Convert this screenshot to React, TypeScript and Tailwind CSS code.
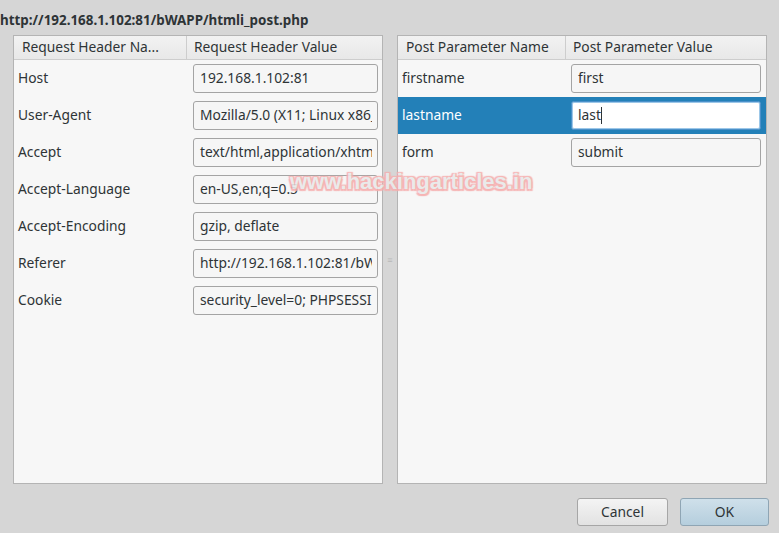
import type { ReactNode } from 'react';

const HEADERS: [string, string][] = [
  ['Host', '192.168.1.102:81'],
  ['User-Agent', 'Mozilla/5.0 (X11; Linux x86_64; rv:52.0) Gecko/20100101 Firefox/52.0'],
  ['Accept', 'text/html,application/xhtml+xml,application/xml;q=0.9,*/*;q=0.8'],
  ['Accept-Language', 'en-US,en;q=0.5'],
  ['Accept-Encoding', 'gzip, deflate'],
  ['Referer', 'http://192.168.1.102:81/bWAPP/htmli_post.php'],
  ['Cookie', 'security_level=0; PHPSESSID=2765ed8d6063b6d8d8768471c2e8f1ed'],
];

const PARAMS: [string, string][] = [
  ['firstname', 'first'],
  ['lastname', 'last'],
  ['form', 'submit'],
];

function Field({ value, active }: { value: string; active?: boolean }) {
  return (
    <div
      className={
        'h-[29px] flex items-center px-[5px] rounded-[3px] border ' +
        (active
          ? 'bg-white border-[#4a90c9] shadow-[inset_0_0_0_1px_#9cc7e8]'
          : 'bg-[#f6f6f6] border-[#a4a4a4]')
      }
    >
      <div className="flex-1 flex items-center overflow-hidden whitespace-nowrap pl-px">
        <span className="text-[#2e3436]">{value}</span>
        {active && <span className="w-px h-[17px] bg-[#2e3436] shrink-0" />}
      </div>
    </div>
  );
}

function Panel({
  cols,
  firstWidth,
  children,
}: {
  cols: [string, string];
  firstWidth: string;
  children: ReactNode;
}) {
  return (
    <div className="w-[370px] h-full bg-[#f7f7f7] border border-[#b4b4b4] flex flex-col">
      {/* Column headers */}
      <div className="h-[24px] flex bg-gradient-to-b from-[#f2f2f2] to-[#e8e8e8] border-b border-[#cdcdcd]">
        <div className={firstWidth + ' flex items-center pl-[8px] border-r border-[#cdcdcd] text-[#2e3436] whitespace-nowrap'}>
          {cols[0]}
        </div>
        <div className="flex-1 flex items-center pl-[7px] text-[#2e3436] whitespace-nowrap">{cols[1]}</div>
      </div>
      {children}
    </div>
  );
}

export default function App() {
  return (
    <div
      className="w-[779px] h-[533px] bg-[#d6d6d6] flex flex-col text-[13.8px] relative overflow-hidden"
      style={{ fontFamily: '"Noto Sans", "Open Sans", sans-serif' }}
    >
      {/* Title */}
      <div className="h-[35px] pt-[10px] leading-[20px] font-bold text-[13.4px] text-[#2e3436]">
        http://192.168.1.102:81/bWAPP/htmli_post.php
      </div>

      {/* Panels */}
      <div className="h-[449px] flex pl-[13px]">
        <Panel cols={['Request Header Na...', 'Request Header Value']} firstWidth="w-[173px]">
          {HEADERS.map(([name, value]) => (
            <div key={name} className="h-[37px] flex items-center">
              <div className="w-[173px] pl-[4px] text-[#2e3436] whitespace-nowrap">{name}</div>
              <div className="w-[185px] ml-[6px]">
                <Field value={value} />
              </div>
            </div>
          ))}
        </Panel>

        {/* Splitter */}
        <div className="w-[14px] flex items-center justify-center">
          <span className="text-[9px] text-[#b8b8b8] leading-none">≡</span>
        </div>

        <Panel cols={['Post Parameter Name', 'Post Parameter Value']} firstWidth="w-[168px]">
          {PARAMS.map(([name, value]) => {
            const active = name === 'lastname';
            return (
              <div
                key={name}
                className={'h-[37px] flex items-center ' + (active ? 'bg-[#2380b8]' : '')}
              >
                <div
                  className={
                    'w-[168px] pl-[4px] whitespace-nowrap ' + (active ? 'text-white' : 'text-[#2e3436]')
                  }
                >
                  {name}
                </div>
                <div className="w-[190px] ml-[5px]">
                  <Field value={value} active={active} />
                </div>
              </div>
            );
          })}
        </Panel>
      </div>

      {/* Buttons */}
      <div className="flex-1 flex justify-end items-start pt-[14px] pr-[10px] gap-[12px]">
        <button className="w-[91px] h-[28px] rounded-[3px] border border-[#a6a6a6] bg-gradient-to-b from-[#f4f4f4] to-[#e2e2e2] text-[#2e3436]">
          Cancel
        </button>
        <button className="w-[89px] h-[28px] rounded-[3px] border border-[#8fa5b4] bg-gradient-to-b from-[#cfe0ea] to-[#b5cedd] text-[#2e3436]">
          OK
        </button>
      </div>

      {/* Watermark */}
      <div
        className="absolute left-[290px] top-[168px] text-[22px] leading-[28px] font-bold text-[#e9e9e9] pointer-events-none opacity-90"
        style={{
          fontFamily: '"Liberation Sans", sans-serif',
          textShadow:
            '0 0 2px #f4a6a6, 1.5px 1.5px 1px #f6b0b0, -1.5px -1.5px 1px #f6b0b0, 1.5px -1.5px 1px #f6b0b0, -1.5px 1.5px 1px #f6b0b0',
        }}
      >
        www.hackingarticles.in
      </div>
    </div>
  );
}
